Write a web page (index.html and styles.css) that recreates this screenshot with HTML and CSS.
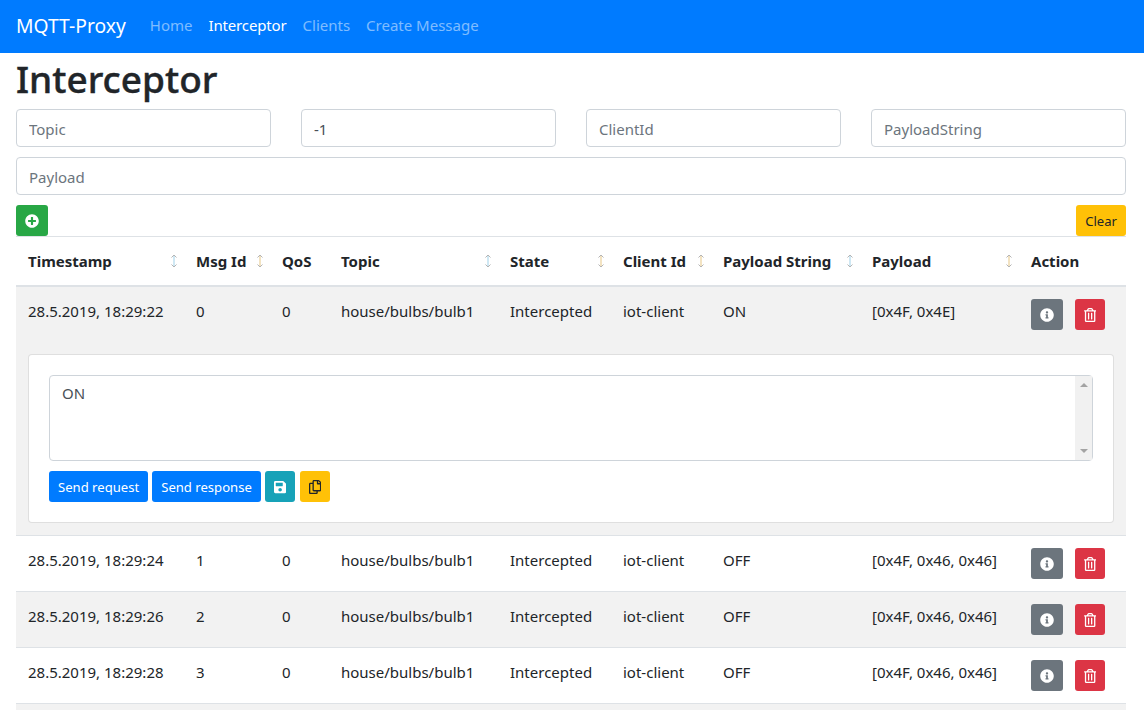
FILE: index.html
```html
<!DOCTYPE html>
<html lang="en">
<head>
    <meta charset="UTF-8">
    <meta name="viewport" content="width=device-width, initial-scale=1.0">
    <title>MQTT-Proxy</title>
    <link rel="stylesheet" href="styles.css">
</head>
<body>
    <svg class="sprites" xmlns="http://www.w3.org/2000/svg">
        <symbol id="i-plus" viewBox="0 0 512 512"><path fill="currentColor" d="M256 8C119 8 8 119 8 256s111 248 248 248 248-111 248-248S393 8 256 8zm144 276c0 6.6-5.4 12-12 12h-92v92c0 6.6-5.4 12-12 12h-56c-6.6 0-12-5.4-12-12v-92h-92c-6.6 0-12-5.4-12-12v-56c0-6.6 5.4-12 12-12h92v-92c0-6.6 5.4-12 12-12h56c6.6 0 12 5.4 12 12v92h92c6.6 0 12 5.4 12 12v56z"/></symbol>
        <symbol id="i-info" viewBox="0 0 512 512"><path fill="currentColor" d="M256 8C119.043 8 8 119.083 8 256c0 136.997 111.043 248 248 248s248-111.003 248-248C504 119.083 392.957 8 256 8zm0 110c23.196 0 42 18.804 42 42s-18.804 42-42 42-42-18.804-42-42 18.804-42 42-42zm56 254c0 6.627-5.373 12-12 12h-88c-6.627 0-12-5.373-12-12v-24c0-6.627 5.373-12 12-12h12v-64h-12c-6.627 0-12-5.373-12-12v-24c0-6.627 5.373-12 12-12h64c6.627 0 12 5.373 12 12v100h12c6.627 0 12 5.373 12 12v24z"/></symbol>
        <symbol id="i-trash" viewBox="0 0 448 512"><path fill="currentColor" d="M268 416h24a12 12 0 0 0 12-12V188a12 12 0 0 0-12-12h-24a12 12 0 0 0-12 12v216a12 12 0 0 0 12 12zM432 80h-82.41l-34-56.7A48 48 0 0 0 274.41 0H173.59a48 48 0 0 0-41.16 23.3L98.41 80H16A16 16 0 0 0 0 96v16a16 16 0 0 0 16 16h16v336a48 48 0 0 0 48 48h288a48 48 0 0 0 48-48V128h16a16 16 0 0 0 16-16V96a16 16 0 0 0-16-16zM171.84 50.91A6 6 0 0 1 177 48h94a6 6 0 0 1 5.15 2.91L293.61 80H154.39zM368 464H80V128h288zm-212-48h24a12 12 0 0 0 12-12V188a12 12 0 0 0-12-12h-24a12 12 0 0 0-12 12v216a12 12 0 0 0 12 12z"/></symbol>
        <symbol id="i-save" viewBox="0 0 448 512"><path fill="currentColor" d="M433.941 129.941l-83.882-83.882A48 48 0 0 0 316.118 32H48C21.49 32 0 53.49 0 80v352c0 26.51 21.49 48 48 48h352c26.51 0 48-21.49 48-48V163.882a48 48 0 0 0-14.059-33.941zM224 416c-35.346 0-64-28.654-64-64 0-35.346 28.654-64 64-64s64 28.654 64 64c0 35.346-28.654 64-64 64zm96-304.52V212c0 6.627-5.373 12-12 12H76c-6.627 0-12-5.373-12-12V108c0-6.627 5.373-12 12-12h228.52c3.183 0 6.235 1.264 8.485 3.515l3.48 3.48A11.996 11.996 0 0 1 320 111.48z"/></symbol>
        <symbol id="i-copy" viewBox="0 0 448 512"><path fill="currentColor" d="M433.941 65.941l-51.882-51.882A48 48 0 0 0 348.118 0H176c-26.51 0-48 21.49-48 48v48H48c-26.51 0-48 21.49-48 48v320c0 26.51 21.49 48 48 48h224c26.51 0 48-21.49 48-48v-48h80c26.51 0 48-21.49 48-48V99.882a48 48 0 0 0-14.059-33.941zM266 464H54a6 6 0 0 1-6-6V150a6 6 0 0 1 6-6h74v224c0 26.51 21.49 48 48 48h96v42a6 6 0 0 1-6 6zm128-96H182a6 6 0 0 1-6-6V54a6 6 0 0 1 6-6h106v88c0 13.255 10.745 24 24 24h88v202a6 6 0 0 1-6 6zm6-256h-64V48h9.632c1.591 0 3.117.632 4.243 1.757l48.368 48.368a6 6 0 0 1 1.757 4.243V112z"/></symbol>
        <symbol id="i-sort" viewBox="0 0 8 14"><path fill="none" stroke="currentColor" stroke-width="2" d="M4 2v10"/><path fill="none" stroke="#b4b4b4" stroke-width="1" d="M1.500 3.500L4 1l2.500 2.500M1.500 10.500L4 13l2.500-2.500"/></symbol>
    </svg>

    <nav class="navbar">
        <a class="brand" href="#">MQTT-Proxy</a>
        <a class="nav-link" href="#">Home</a>
        <a class="nav-link active" href="#">Interceptor</a>
        <a class="nav-link" href="#">Clients</a>
        <a class="nav-link" href="#">Create Message</a>
    </nav>

    <main class="content">
        <h1>Interceptor</h1>

        <div class="filters">
            <input class="form-control" type="text" placeholder="Topic">
            <input class="form-control" type="text" value="-1">
            <input class="form-control" type="text" placeholder="ClientId">
            <input class="form-control" type="text" placeholder="PayloadString">
            <input class="form-control span-all" type="text" placeholder="Payload">
        </div>

        <div class="toolbar">
            <button class="btn btn-success btn-icon"><svg class="icon"><use href="#i-plus"/></svg></button>
            <button class="btn btn-warning">Clear</button>
        </div>

        <table class="messages">
            <colgroup>
                <col class="col-time">
                <col class="col-id">
                <col class="col-qos">
                <col class="col-topic">
                <col class="col-state">
                <col class="col-client">
                <col class="col-string">
                <col class="col-payload">
                <col class="col-action">
            </colgroup>
            <thead>
                <tr>
                    <th class="sortable"><div class="th-inner">Timestamp<svg class="sort sort-blue"><use href="#i-sort"/></svg></div></th>
                    <th class="sortable"><div class="th-inner">Msg Id<svg class="sort sort-orange"><use href="#i-sort"/></svg></div></th>
                    <th>QoS</th>
                    <th class="sortable"><div class="th-inner">Topic<svg class="sort sort-blue"><use href="#i-sort"/></svg></div></th>
                    <th class="sortable"><div class="th-inner">State<svg class="sort sort-orange"><use href="#i-sort"/></svg></div></th>
                    <th class="sortable"><div class="th-inner">Client Id<svg class="sort sort-orange"><use href="#i-sort"/></svg></div></th>
                    <th class="sortable"><div class="th-inner">Payload String<svg class="sort sort-blue"><use href="#i-sort"/></svg></div></th>
                    <th class="sortable"><div class="th-inner">Payload<svg class="sort sort-orange"><use href="#i-sort"/></svg></div></th>
                    <th>Action</th>
                </tr>
            </thead>
            <tbody>
                <tr class="striped first">
                    <td>28.5.2019, 18:29:22</td>
                    <td>0</td>
                    <td>0</td>
                    <td>house/bulbs/bulb1</td>
                    <td>Intercepted</td>
                    <td>iot-client</td>
                    <td>ON</td>
                    <td>[0x4F, 0x4E]</td>
                    <td class="actions">
                        <button class="btn btn-secondary btn-icon"><svg class="icon"><use href="#i-info"/></svg></button>
                        <button class="btn btn-danger btn-icon"><svg class="icon-narrow"><use href="#i-trash"/></svg></button>
                    </td>
                </tr>
                <tr class="striped first">
                    <td colspan="9">
                        <div class="card">
                            <div class="editor-wrap">
                                <textarea class="form-control editor">ON</textarea>
                                <div class="scrollbar">
                                    <span class="arrow-up"></span>
                                    <span class="arrow-down"></span>
                                </div>
                            </div>
                            <div class="editor-buttons">
                                <button class="btn btn-primary">Send request</button>
                                <button class="btn btn-primary">Send response</button>
                                <button class="btn btn-info btn-icon"><svg class="icon-narrow"><use href="#i-save"/></svg></button>
                                <button class="btn btn-warning btn-icon btn-copy"><svg class="icon-narrow"><use href="#i-copy"/></svg></button>
                            </div>
                        </div>
                    </td>
                </tr>
                <tr>
                    <td>28.5.2019, 18:29:24</td>
                    <td>1</td>
                    <td>0</td>
                    <td>house/bulbs/bulb1</td>
                    <td>Intercepted</td>
                    <td>iot-client</td>
                    <td>OFF</td>
                    <td>[0x4F, 0x46, 0x46]</td>
                    <td class="actions">
                        <button class="btn btn-secondary btn-icon"><svg class="icon"><use href="#i-info"/></svg></button>
                        <button class="btn btn-danger btn-icon"><svg class="icon-narrow"><use href="#i-trash"/></svg></button>
                    </td>
                </tr>
                <tr class="striped">
                    <td>28.5.2019, 18:29:26</td>
                    <td>2</td>
                    <td>0</td>
                    <td>house/bulbs/bulb1</td>
                    <td>Intercepted</td>
                    <td>iot-client</td>
                    <td>OFF</td>
                    <td>[0x4F, 0x46, 0x46]</td>
                    <td class="actions">
                        <button class="btn btn-secondary btn-icon"><svg class="icon"><use href="#i-info"/></svg></button>
                        <button class="btn btn-danger btn-icon"><svg class="icon-narrow"><use href="#i-trash"/></svg></button>
                    </td>
                </tr>
                <tr>
                    <td>28.5.2019, 18:29:28</td>
                    <td>3</td>
                    <td>0</td>
                    <td>house/bulbs/bulb1</td>
                    <td>Intercepted</td>
                    <td>iot-client</td>
                    <td>OFF</td>
                    <td>[0x4F, 0x46, 0x46]</td>
                    <td class="actions">
                        <button class="btn btn-secondary btn-icon"><svg class="icon"><use href="#i-info"/></svg></button>
                        <button class="btn btn-danger btn-icon"><svg class="icon-narrow"><use href="#i-trash"/></svg></button>
                    </td>
                </tr>
                <tr class="striped">
                    <td colspan="9">&nbsp;</td>
                </tr>
            </tbody>
        </table>
    </main>
</body>
</html>
```

FILE: styles.css
```css
html, body {
    height: 710px;
    overflow: hidden;
}
body {
    margin: 0;
    font-family: "Noto Sans", "Open Sans", sans-serif;
    font-size: 15px;
    line-height: 24px;
    color: #212529;
    background-color: #fff;
}
.sprites {
    display: none;
}

.navbar {
    display: flex;
    align-items: center;
    height: 53px;
    box-sizing: border-box;
    padding: 0 16px;
    background-color: #007bff;
}
.brand {
    margin-right: 16px;
    padding-bottom: 2px;
    font-size: 19.3px;
    color: #fff;
    text-decoration: none;
}
.nav-link {
    padding: 6px 8px 10px;
    color: rgba(255,255,255,0.5);
    text-decoration: none;
}
.nav-link.active {
    color: #fff;
    letter-spacing: -0.15px;
}

.content {
    padding: 0 18px 0 16px;
}
h1 {
    margin: 0 0 6px;
    padding-top: 2px;
    font-size: 37px;
    font-weight: 500;
    line-height: 48px;
    -webkit-text-stroke: 0.4px #212529;
}

.form-control {
    display: block;
    box-sizing: border-box;
    width: 100%;
    height: 38px;
    padding: 7px 12px 5px;
    font: inherit;
    color: #495057;
    background-color: #fff;
    border: 1px solid #ced4da;
    border-radius: 4px;
}
.form-control::placeholder {
    color: #6c757d;
}
.filters {
    display: grid;
    grid-template-columns: repeat(4, 1fr);
    gap: 10px 30px;
    margin-bottom: 10px;
}
.span-all {
    grid-column: 1 / -1;
}
.toolbar {
    display: flex;
    justify-content: space-between;
}

.btn {
    box-sizing: border-box;
    height: 31px;
    padding: 5px 8px 3px;
    font: inherit;
    font-size: 13.1px;
    line-height: 21px;
    border: 1px solid transparent;
    border-radius: 3px;
    cursor: pointer;
}
.btn-icon {
    display: inline-flex;
    align-items: center;
    justify-content: center;
    padding: 4px 8px;
}
.btn-copy {
    margin-left: 1px;
}
.btn-primary { background-color: #007bff; color: #fff; }
.btn-secondary { background-color: #6c757d; color: #fff; }
.btn-success { background-color: #28a745; color: #fff; }
.btn-danger { background-color: #dc3545; color: #fff; }
.btn-warning { background-color: #ffc107; color: #212529; }
.btn-info { background-color: #17a2b8; color: #fff; }
.icon {
    width: 14px;
    height: 14px;
}
.icon-narrow {
    width: 12.250px;
    height: 14px;
}

.messages {
    width: 1110px;
    table-layout: fixed;
    border-collapse: separate;
    border-spacing: 0;
}
.col-time { width: 168px; }
.col-id { width: 86px; }
.col-qos { width: 59px; }
.col-topic { width: 169px; }
.col-state { width: 113px; }
.col-client { width: 100px; }
.col-string { width: 149px; }
.col-payload { width: 159px; }
.col-action { width: 107px; }
th {
    padding: 12px;
    text-align: left;
    font-weight: 700;
    border-top: 1px solid #dee2e6;
    border-bottom: 2px solid #dee2e6;
}
th.sortable {
    padding-right: 6px;
}
.th-inner {
    display: flex;
    align-items: center;
    justify-content: space-between;
}
.sort {
    flex: none;
    width: 8px;
    height: 14px;
}
.sort-blue { color: #cfe8f4; }
.sort-orange { color: #f3e3c2; }
td {
    padding: 12px;
    vertical-align: top;
    white-space: nowrap;
    border-top: 1px solid #dee2e6;
}
.first td {
    border-top: 0;
}
.striped td {
    background-color: #f2f2f2;
}
.actions {
    display: flex;
    gap: 12px;
}

.card {
    padding: 20px;
    background-color: #fff;
    border: 1px solid rgba(0,0,0,0.125);
    border-radius: 4px;
}
.editor-wrap {
    position: relative;
}
.editor {
    height: 86px;
    padding-top: 5px;
    resize: none;
    overflow: hidden;
}
/* headless hides real scrollbars, so this one is drawn over the textarea */
.scrollbar {
    position: absolute;
    top: 1px;
    right: 1px;
    bottom: 1px;
    width: 17px;
    display: flex;
    flex-direction: column;
    align-items: center;
    justify-content: space-between;
    padding: 7px 0;
    box-sizing: border-box;
    background-color: #f1f1f1;
}
.arrow-up, .arrow-down {
    width: 0;
    height: 0;
    border-left: 4px solid transparent;
    border-right: 4px solid transparent;
}
.arrow-up {
    border-bottom: 4px solid #a3a3a3;
}
.arrow-down {
    border-top: 4px solid #a3a3a3;
}
.editor-buttons {
    display: flex;
    gap: 4px;
    margin-top: 10px;
}
```
